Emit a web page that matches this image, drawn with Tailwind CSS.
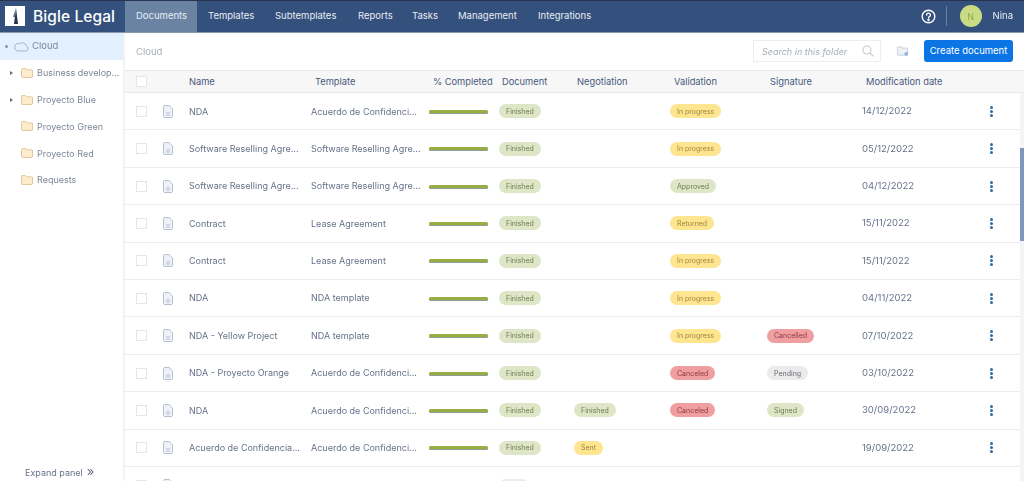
<!doctype html>
<html><head><meta charset="utf-8"><script src="https://cdn.jsdelivr.net/npm/@tailwindcss/browser@4"></script></head>
<body class="m-0 bg-white">
<div class="w-[1024px] h-[481px] overflow-hidden flex flex-col blur-[0.3px] font-['Inter','Liberation_Sans',sans-serif] text-[9px] text-[#66728a]">
<header class="h-[32.5px] shrink-0 flex items-stretch bg-[#34507c] border-t border-[#28364f] border-b border-b-[#8b98ab] text-white">
  <div class="w-[125px] flex items-center pl-[5px] gap-[8px]">
    <div class="w-[20px] h-[20px] bg-white flex items-center justify-center"><svg width="12" height="18" viewBox="0 0 12 18"><path d="M7 1 L9 17 L5 17 Z" fill="#24344f"/><path d="M7 1 L4 10 L6 10 Z" fill="#5d6f8a"/></svg></div>
    <span class="text-[15.5px] font-medium leading-none tracking-[0.1px]">Bigle Legal</span>
  </div>
  <nav class="flex items-stretch text-[9.5px] text-[#e8edf4]">
    <a class="w-[72px] pl-[11px] flex items-center bg-[#6b83a3]">Documents</a>
    <a class="w-[67px] pl-[11px] flex items-center">Templates</a>
    <a class="w-[83px] pl-[11px] flex items-center">Subtemplates</a>
    <a class="w-[54px] pl-[11px] flex items-center">Reports</a>
    <a class="w-[46px] pl-[11px] flex items-center">Tasks</a>
    <a class="w-[80px] pl-[11px] flex items-center">Management</a>
    <a class="w-[90px] pl-[11px] flex items-center">Integrations</a>
  </nav>
  <div class="ml-auto flex items-center pr-[11px]">
    <svg width="15" height="15" viewBox="0 0 15 15" fill="none" stroke="white" stroke-width="1.4"><circle cx="7.5" cy="7.5" r="6.3"/><path d="M5.6 6a1.9 1.9 0 1 1 2.8 1.7c-.6.3-.9.6-.9 1.3" stroke-linecap="round"/><circle cx="7.5" cy="11" r=".5" fill="white"/></svg>
    <div class="w-px h-[20px] bg-[#6e819d] ml-[10px] mr-[13px]"></div>
    <div class="w-[22px] h-[22px] rounded-full bg-[#c9dc85] text-[#8fae4a] flex items-center justify-center text-[9px]">N</div>
    <span class="ml-[11px] text-[9.5px] text-[#e8edf4]">Nina</span>
  </div>
</header>
<div class="flex flex-1 min-h-0">
  <aside class="w-[125px] shrink-0 border-r-2 border-[#f3f3f3] flex flex-col text-[#7d8798]">
    <div class="h-[27px] bg-[#e3f0fd] flex items-center pl-[5px]">
      <span class="w-[3px] h-[3px] rounded-full bg-[#8a94a5]"></span>
      <svg class="ml-[6px]" width="15" height="11" viewBox="0 0 15 11" fill="none" stroke="#9aa5b5" stroke-width=".8"><path d="M3.5 10h8.2a2.6 2.6 0 0 0 .5-5.1A4 4 0 0 0 5.6 2.7 3.4 3.4 0 0 0 3.5 10Z"/></svg>
      <span class="ml-[3px] text-[9.5px]">Cloud</span>
    </div>
    <div class="h-[26.8px] flex items-center pl-[10px]"><span class="w-0 h-0 border-y-[2px] border-y-transparent border-l-[3px] border-l-[#5d6a7d]"></span><svg class="ml-[8px]" width="12" height="10" viewBox="0 0 12 10" fill="#fbeccd" stroke="#d9bd8b" stroke-width=".8"><path d="M.5 1.5a1 1 0 0 1 1-1h3l1 1.3h5a1 1 0 0 1 1 1v5.7a1 1 0 0 1-1 1h-9a1 1 0 0 1-1-1Z"/></svg><span class="ml-[4px] whitespace-nowrap">Business develop...</span></div>
    <div class="h-[26.8px] flex items-center pl-[10px]"><span class="w-0 h-0 border-y-[2px] border-y-transparent border-l-[3px] border-l-[#5d6a7d]"></span><svg class="ml-[8px]" width="12" height="10" viewBox="0 0 12 10" fill="#fbeccd" stroke="#d9bd8b" stroke-width=".8"><path d="M.5 1.5a1 1 0 0 1 1-1h3l1 1.3h5a1 1 0 0 1 1 1v5.7a1 1 0 0 1-1 1h-9a1 1 0 0 1-1-1Z"/></svg><span class="ml-[4px]">Proyecto Blue</span></div>
    <div class="h-[26.8px] flex items-center pl-[21px]"><svg width="12" height="10" viewBox="0 0 12 10" fill="#fbeccd" stroke="#d9bd8b" stroke-width=".8"><path d="M.5 1.5a1 1 0 0 1 1-1h3l1 1.3h5a1 1 0 0 1 1 1v5.7a1 1 0 0 1-1 1h-9a1 1 0 0 1-1-1Z"/></svg><span class="ml-[4px]">Proyecto Green</span></div>
    <div class="h-[26.8px] flex items-center pl-[21px]"><svg width="12" height="10" viewBox="0 0 12 10" fill="#fbeccd" stroke="#d9bd8b" stroke-width=".8"><path d="M.5 1.5a1 1 0 0 1 1-1h3l1 1.3h5a1 1 0 0 1 1 1v5.7a1 1 0 0 1-1 1h-9a1 1 0 0 1-1-1Z"/></svg><span class="ml-[4px]">Proyecto Red</span></div>
    <div class="h-[26.8px] flex items-center pl-[21px]"><svg width="12" height="10" viewBox="0 0 12 10" fill="#fbeccd" stroke="#d9bd8b" stroke-width=".8"><path d="M.5 1.5a1 1 0 0 1 1-1h3l1 1.3h5a1 1 0 0 1 1 1v5.7a1 1 0 0 1-1 1h-9a1 1 0 0 1-1-1Z"/></svg><span class="ml-[4px]">Requests</span></div>
    <div class="mt-auto h-[15px] pl-[25px] flex items-start text-[#66728a]">Expand panel <span class="ml-[4px] leading-[11px] text-[13px]">»</span></div>
  </aside>
  <main class="flex-1 min-w-0 flex flex-col relative">
    <div class="h-[37.6px] shrink-0 flex items-center pl-[11px] pr-[11px]">
      <span class="text-[#a7aeb9] text-[9.5px] mt-[1px]">Cloud</span>
      <div class="ml-auto w-[128px] h-[22px] border border-[#eeeeee] flex items-center justify-between pl-[8px] pr-[6px] italic text-[#a7aeb9]">Search in this folder
        <svg width="12" height="12" viewBox="0 0 12 12" fill="none" stroke="#c3c8cf" stroke-width="1.1"><circle cx="5" cy="5" r="4"/><path d="M8 8l3.4 3.4"/></svg>
      </div>
      <svg class="ml-[16px] mt-[1px]" width="12" height="11" viewBox="0 0 13 11" fill="#eef2f7" stroke="#b5c2d3" stroke-width=".8"><path d="M.5 1.5a1 1 0 0 1 1-1h3l1 1.3h5a1 1 0 0 1 1 1v5.7a1 1 0 0 1-1 1h-9a1 1 0 0 1-1-1Z"/><circle cx="10" cy="8" r="2" fill="#8fb4dc" stroke="none"/></svg>
      <button class="ml-[15px] w-[89px] h-[22px] rounded-[3px] bg-[#0b75e6] text-white text-[9.5px] font-normal">Create document</button>
    </div>
    <div class="h-[23px] shrink-0 pl-[11px] grid grid-cols-[27px_26px_122px_118px_70px_75px_96px_97px_95px_1fr] items-center bg-[#f7f7f7] border-y border-[#e9e9e9] text-[#47597a] text-[9.3px]">
      <span class="w-[11px] h-[11px] bg-white border border-[#e6e6e6]"></span><span></span><span>Name</span><span class="pl-[4px]">Template</span><span class="pl-[4px] whitespace-nowrap">% Completed</span><span class="pl-[3px]">Document</span><span class="pl-[3px]">Negotiation</span><span class="pl-[4px]">Validation</span><span class="pl-[3px]">Signature</span><span class="pl-[4px]">Modification date</span>
    </div>

    <div class="h-[37.4px] shrink-0 pl-[11px] grid grid-cols-[27px_26px_122px_118px_70px_75px_96px_97px_95px_125px_1fr] items-center border-b border-[#ececec]"><span class="w-[11px] h-[11px] border border-[#e6e6e6]"></span><svg width="10" height="13" viewBox="0 0 10 13" fill="#eef2f7" stroke="#a4b2c6" stroke-width=".8"><path d="M.5 1.5a1 1 0 0 1 1-1h4.6l3.4 3.4v7.6a1 1 0 0 1-1 1h-7a1 1 0 0 1-1-1Z"/><path d="M3 8h4M3 10h4" fill="none"/></svg><span class="truncate">NDA</span><span>Acuerdo de Confidenci...</span><span class="w-[59px] h-[3px] rounded-full bg-[#96ae44] shadow-[0_1px_0_#8f9c95]"></span><span class="justify-self-start rounded-full h-[14px] px-[7px] flex items-center leading-none text-[7px] bg-[#dfe6c8] text-[#6a7a50]">Finished</span><span></span><span class="justify-self-start rounded-full h-[14px] px-[7px] flex items-center leading-none text-[7px] bg-[#fde68f] text-[#a0843c]">In progress</span><span></span><span class="text-[9.5px]">14/12/2022</span><span class="flex flex-col gap-[1px] pl-[3px]"><i class="w-[3px] h-[3px] rounded-full bg-[#2d6a9f]"></i><i class="w-[3px] h-[3px] rounded-full bg-[#2d6a9f]"></i><i class="w-[3px] h-[3px] rounded-full bg-[#2d6a9f]"></i></span></div>

    <div class="h-[37.4px] shrink-0 pl-[11px] grid grid-cols-[27px_26px_122px_118px_70px_75px_96px_97px_95px_125px_1fr] items-center border-b border-[#ececec]"><span class="w-[11px] h-[11px] border border-[#e6e6e6]"></span><svg width="10" height="13" viewBox="0 0 10 13" fill="#eef2f7" stroke="#a4b2c6" stroke-width=".8"><path d="M.5 1.5a1 1 0 0 1 1-1h4.6l3.4 3.4v7.6a1 1 0 0 1-1 1h-7a1 1 0 0 1-1-1Z"/><path d="M3 8h4M3 10h4" fill="none"/></svg><span class="whitespace-nowrap">Software Reselling Agre...</span><span class="whitespace-nowrap">Software Reselling Agre...</span><span class="w-[59px] h-[3px] rounded-full bg-[#96ae44] shadow-[0_1px_0_#8f9c95]"></span><span class="justify-self-start rounded-full h-[14px] px-[7px] flex items-center leading-none text-[7px] bg-[#dfe6c8] text-[#6a7a50]">Finished</span><span></span><span class="justify-self-start rounded-full h-[14px] px-[7px] flex items-center leading-none text-[7px] bg-[#fde68f] text-[#a0843c]">In progress</span><span></span><span class="text-[9.5px]">05/12/2022</span><span class="flex flex-col gap-[1px] pl-[3px]"><i class="w-[3px] h-[3px] rounded-full bg-[#2d6a9f]"></i><i class="w-[3px] h-[3px] rounded-full bg-[#2d6a9f]"></i><i class="w-[3px] h-[3px] rounded-full bg-[#2d6a9f]"></i></span></div>

    <div class="h-[37.4px] shrink-0 pl-[11px] grid grid-cols-[27px_26px_122px_118px_70px_75px_96px_97px_95px_125px_1fr] items-center border-b border-[#ececec]"><span class="w-[11px] h-[11px] border border-[#e6e6e6]"></span><svg width="10" height="13" viewBox="0 0 10 13" fill="#eef2f7" stroke="#a4b2c6" stroke-width=".8"><path d="M.5 1.5a1 1 0 0 1 1-1h4.6l3.4 3.4v7.6a1 1 0 0 1-1 1h-7a1 1 0 0 1-1-1Z"/><path d="M3 8h4M3 10h4" fill="none"/></svg><span class="whitespace-nowrap">Software Reselling Agre...</span><span class="whitespace-nowrap">Software Reselling Agre...</span><span class="w-[59px] h-[3px] rounded-full bg-[#96ae44] shadow-[0_1px_0_#8f9c95]"></span><span class="justify-self-start rounded-full h-[14px] px-[7px] flex items-center leading-none text-[7px] bg-[#dfe6c8] text-[#6a7a50]">Finished</span><span></span><span class="justify-self-start rounded-full h-[14px] px-[7px] flex items-center leading-none text-[7px] bg-[#dfe6c8] text-[#6a7a50]">Approved</span><span></span><span class="text-[9.5px]">04/12/2022</span><span class="flex flex-col gap-[1px] pl-[3px]"><i class="w-[3px] h-[3px] rounded-full bg-[#2d6a9f]"></i><i class="w-[3px] h-[3px] rounded-full bg-[#2d6a9f]"></i><i class="w-[3px] h-[3px] rounded-full bg-[#2d6a9f]"></i></span></div>

    <div class="h-[37.4px] shrink-0 pl-[11px] grid grid-cols-[27px_26px_122px_118px_70px_75px_96px_97px_95px_125px_1fr] items-center border-b border-[#ececec]"><span class="w-[11px] h-[11px] border border-[#e6e6e6]"></span><svg width="10" height="13" viewBox="0 0 10 13" fill="#eef2f7" stroke="#a4b2c6" stroke-width=".8"><path d="M.5 1.5a1 1 0 0 1 1-1h4.6l3.4 3.4v7.6a1 1 0 0 1-1 1h-7a1 1 0 0 1-1-1Z"/><path d="M3 8h4M3 10h4" fill="none"/></svg><span>Contract</span><span>Lease Agreement</span><span class="w-[59px] h-[3px] rounded-full bg-[#96ae44] shadow-[0_1px_0_#8f9c95]"></span><span class="justify-self-start rounded-full h-[14px] px-[7px] flex items-center leading-none text-[7px] bg-[#dfe6c8] text-[#6a7a50]">Finished</span><span></span><span class="justify-self-start rounded-full h-[14px] px-[7px] flex items-center leading-none text-[7px] bg-[#fde68f] text-[#a0843c]">Returned</span><span></span><span class="text-[9.5px]">15/11/2022</span><span class="flex flex-col gap-[1px] pl-[3px]"><i class="w-[3px] h-[3px] rounded-full bg-[#2d6a9f]"></i><i class="w-[3px] h-[3px] rounded-full bg-[#2d6a9f]"></i><i class="w-[3px] h-[3px] rounded-full bg-[#2d6a9f]"></i></span></div>

    <div class="h-[37.4px] shrink-0 pl-[11px] grid grid-cols-[27px_26px_122px_118px_70px_75px_96px_97px_95px_125px_1fr] items-center border-b border-[#ececec]"><span class="w-[11px] h-[11px] border border-[#e6e6e6]"></span><svg width="10" height="13" viewBox="0 0 10 13" fill="#eef2f7" stroke="#a4b2c6" stroke-width=".8"><path d="M.5 1.5a1 1 0 0 1 1-1h4.6l3.4 3.4v7.6a1 1 0 0 1-1 1h-7a1 1 0 0 1-1-1Z"/><path d="M3 8h4M3 10h4" fill="none"/></svg><span>Contract</span><span>Lease Agreement</span><span class="w-[59px] h-[3px] rounded-full bg-[#96ae44] shadow-[0_1px_0_#8f9c95]"></span><span class="justify-self-start rounded-full h-[14px] px-[7px] flex items-center leading-none text-[7px] bg-[#dfe6c8] text-[#6a7a50]">Finished</span><span></span><span class="justify-self-start rounded-full h-[14px] px-[7px] flex items-center leading-none text-[7px] bg-[#fde68f] text-[#a0843c]">In progress</span><span></span><span class="text-[9.5px]">15/11/2022</span><span class="flex flex-col gap-[1px] pl-[3px]"><i class="w-[3px] h-[3px] rounded-full bg-[#2d6a9f]"></i><i class="w-[3px] h-[3px] rounded-full bg-[#2d6a9f]"></i><i class="w-[3px] h-[3px] rounded-full bg-[#2d6a9f]"></i></span></div>

    <div class="h-[37.4px] shrink-0 pl-[11px] grid grid-cols-[27px_26px_122px_118px_70px_75px_96px_97px_95px_125px_1fr] items-center border-b border-[#ececec]"><span class="w-[11px] h-[11px] border border-[#e6e6e6]"></span><svg width="10" height="13" viewBox="0 0 10 13" fill="#eef2f7" stroke="#a4b2c6" stroke-width=".8"><path d="M.5 1.5a1 1 0 0 1 1-1h4.6l3.4 3.4v7.6a1 1 0 0 1-1 1h-7a1 1 0 0 1-1-1Z"/><path d="M3 8h4M3 10h4" fill="none"/></svg><span>NDA</span><span>NDA template</span><span class="w-[59px] h-[3px] rounded-full bg-[#96ae44] shadow-[0_1px_0_#8f9c95]"></span><span class="justify-self-start rounded-full h-[14px] px-[7px] flex items-center leading-none text-[7px] bg-[#dfe6c8] text-[#6a7a50]">Finished</span><span></span><span class="justify-self-start rounded-full h-[14px] px-[7px] flex items-center leading-none text-[7px] bg-[#fde68f] text-[#a0843c]">In progress</span><span></span><span class="text-[9.5px]">04/11/2022</span><span class="flex flex-col gap-[1px] pl-[3px]"><i class="w-[3px] h-[3px] rounded-full bg-[#2d6a9f]"></i><i class="w-[3px] h-[3px] rounded-full bg-[#2d6a9f]"></i><i class="w-[3px] h-[3px] rounded-full bg-[#2d6a9f]"></i></span></div>

    <div class="h-[37.4px] shrink-0 pl-[11px] grid grid-cols-[27px_26px_122px_118px_70px_75px_96px_97px_95px_125px_1fr] items-center border-b border-[#ececec]"><span class="w-[11px] h-[11px] border border-[#e6e6e6]"></span><svg width="10" height="13" viewBox="0 0 10 13" fill="#eef2f7" stroke="#a4b2c6" stroke-width=".8"><path d="M.5 1.5a1 1 0 0 1 1-1h4.6l3.4 3.4v7.6a1 1 0 0 1-1 1h-7a1 1 0 0 1-1-1Z"/><path d="M3 8h4M3 10h4" fill="none"/></svg><span>NDA - Yellow Project</span><span>NDA template</span><span class="w-[59px] h-[3px] rounded-full bg-[#96ae44] shadow-[0_1px_0_#8f9c95]"></span><span class="justify-self-start rounded-full h-[14px] px-[7px] flex items-center leading-none text-[7px] bg-[#dfe6c8] text-[#6a7a50]">Finished</span><span></span><span class="justify-self-start rounded-full h-[14px] px-[7px] flex items-center leading-none text-[7px] bg-[#fde68f] text-[#a0843c]">In progress</span><span class="justify-self-start rounded-full h-[14px] px-[7px] flex items-center leading-none text-[7px] bg-[#ef9f9f] text-[#8c3a44]">Cancelled</span><span class="text-[9.5px]">07/10/2022</span><span class="flex flex-col gap-[1px] pl-[3px]"><i class="w-[3px] h-[3px] rounded-full bg-[#2d6a9f]"></i><i class="w-[3px] h-[3px] rounded-full bg-[#2d6a9f]"></i><i class="w-[3px] h-[3px] rounded-full bg-[#2d6a9f]"></i></span></div>

    <div class="h-[37.4px] shrink-0 pl-[11px] grid grid-cols-[27px_26px_122px_118px_70px_75px_96px_97px_95px_125px_1fr] items-center border-b border-[#ececec]"><span class="w-[11px] h-[11px] border border-[#e6e6e6]"></span><svg width="10" height="13" viewBox="0 0 10 13" fill="#eef2f7" stroke="#a4b2c6" stroke-width=".8"><path d="M.5 1.5a1 1 0 0 1 1-1h4.6l3.4 3.4v7.6a1 1 0 0 1-1 1h-7a1 1 0 0 1-1-1Z"/><path d="M3 8h4M3 10h4" fill="none"/></svg><span>NDA - Proyecto Orange</span><span>Acuerdo de Confidenci...</span><span class="w-[59px] h-[3px] rounded-full bg-[#96ae44] shadow-[0_1px_0_#8f9c95]"></span><span class="justify-self-start rounded-full h-[14px] px-[7px] flex items-center leading-none text-[7px] bg-[#dfe6c8] text-[#6a7a50]">Finished</span><span></span><span class="justify-self-start rounded-full h-[14px] px-[7px] flex items-center leading-none text-[7px] bg-[#ef9f9f] text-[#8c3a44]">Canceled</span><span class="justify-self-start rounded-full h-[14px] px-[7px] flex items-center leading-none text-[7px] bg-[#ebebeb] text-[#666b73]">Pending</span><span class="text-[9.5px]">03/10/2022</span><span class="flex flex-col gap-[1px] pl-[3px]"><i class="w-[3px] h-[3px] rounded-full bg-[#2d6a9f]"></i><i class="w-[3px] h-[3px] rounded-full bg-[#2d6a9f]"></i><i class="w-[3px] h-[3px] rounded-full bg-[#2d6a9f]"></i></span></div>

    <div class="h-[37.4px] shrink-0 pl-[11px] grid grid-cols-[27px_26px_122px_118px_70px_75px_96px_97px_95px_125px_1fr] items-center border-b border-[#ececec]"><span class="w-[11px] h-[11px] border border-[#e6e6e6]"></span><svg width="10" height="13" viewBox="0 0 10 13" fill="#eef2f7" stroke="#a4b2c6" stroke-width=".8"><path d="M.5 1.5a1 1 0 0 1 1-1h4.6l3.4 3.4v7.6a1 1 0 0 1-1 1h-7a1 1 0 0 1-1-1Z"/><path d="M3 8h4M3 10h4" fill="none"/></svg><span>NDA</span><span>Acuerdo de Confidenci...</span><span class="w-[59px] h-[3px] rounded-full bg-[#96ae44] shadow-[0_1px_0_#8f9c95]"></span><span class="justify-self-start rounded-full h-[14px] px-[7px] flex items-center leading-none text-[7px] bg-[#dfe6c8] text-[#6a7a50]">Finished</span><span class="justify-self-start rounded-full h-[14px] px-[7px] flex items-center leading-none text-[7px] bg-[#dfe6c8] text-[#6a7a50]">Finished</span><span class="justify-self-start rounded-full h-[14px] px-[7px] flex items-center leading-none text-[7px] bg-[#ef9f9f] text-[#8c3a44]">Canceled</span><span class="justify-self-start rounded-full h-[14px] px-[7px] flex items-center leading-none text-[7px] bg-[#dfe6c8] text-[#6a7a50]">Signed</span><span class="text-[9.5px]">30/09/2022</span><span class="flex flex-col gap-[1px] pl-[3px]"><i class="w-[3px] h-[3px] rounded-full bg-[#2d6a9f]"></i><i class="w-[3px] h-[3px] rounded-full bg-[#2d6a9f]"></i><i class="w-[3px] h-[3px] rounded-full bg-[#2d6a9f]"></i></span></div>

    <div class="h-[37.4px] shrink-0 pl-[11px] grid grid-cols-[27px_26px_122px_118px_70px_75px_96px_97px_95px_125px_1fr] items-center border-b border-[#ececec]"><span class="w-[11px] h-[11px] border border-[#e6e6e6]"></span><svg width="10" height="13" viewBox="0 0 10 13" fill="#eef2f7" stroke="#a4b2c6" stroke-width=".8"><path d="M.5 1.5a1 1 0 0 1 1-1h4.6l3.4 3.4v7.6a1 1 0 0 1-1 1h-7a1 1 0 0 1-1-1Z"/><path d="M3 8h4M3 10h4" fill="none"/></svg><span class="whitespace-nowrap">Acuerdo de Confidencia...</span><span>Acuerdo de Confidenci...</span><span class="w-[59px] h-[3px] rounded-full bg-[#96ae44] shadow-[0_1px_0_#8f9c95]"></span><span class="justify-self-start rounded-full h-[14px] px-[7px] flex items-center leading-none text-[7px] bg-[#dfe6c8] text-[#6a7a50]">Finished</span><span class="justify-self-start rounded-full h-[14px] px-[7px] flex items-center leading-none text-[7px] bg-[#fde68f] text-[#a0843c]">Sent</span><span></span><span></span><span class="text-[9.5px]">19/09/2022</span><span class="flex flex-col gap-[1px] pl-[3px]"><i class="w-[3px] h-[3px] rounded-full bg-[#2d6a9f]"></i><i class="w-[3px] h-[3px] rounded-full bg-[#2d6a9f]"></i><i class="w-[3px] h-[3px] rounded-full bg-[#2d6a9f]"></i></span></div>

    <div class="h-[37.4px] shrink-0 pl-[11px] grid grid-cols-[27px_26px_122px_118px_70px_75px_96px_97px_95px_125px_1fr] items-center"><span class="w-[11px] h-[11px] border border-[#e6e6e6]"></span><svg width="10" height="13" viewBox="0 0 10 13" fill="#eef2f7" stroke="#a4b2c6" stroke-width=".8"><path d="M.5 1.5a1 1 0 0 1 1-1h4.6l3.4 3.4v7.6a1 1 0 0 1-1 1h-7a1 1 0 0 1-1-1Z"/></svg><span></span><span></span><span></span><span class="justify-self-start w-[30px] rounded-full h-[14px] bg-[#ebebeb]"></span></div>

    <div class="absolute right-0 top-[60px] bottom-0 w-[4px] bg-[#f4f5f7]"><div class="mt-[55px] h-[93px] bg-[#7f97bd]"></div></div>
  </main>
</div>
</div>
</body></html>
